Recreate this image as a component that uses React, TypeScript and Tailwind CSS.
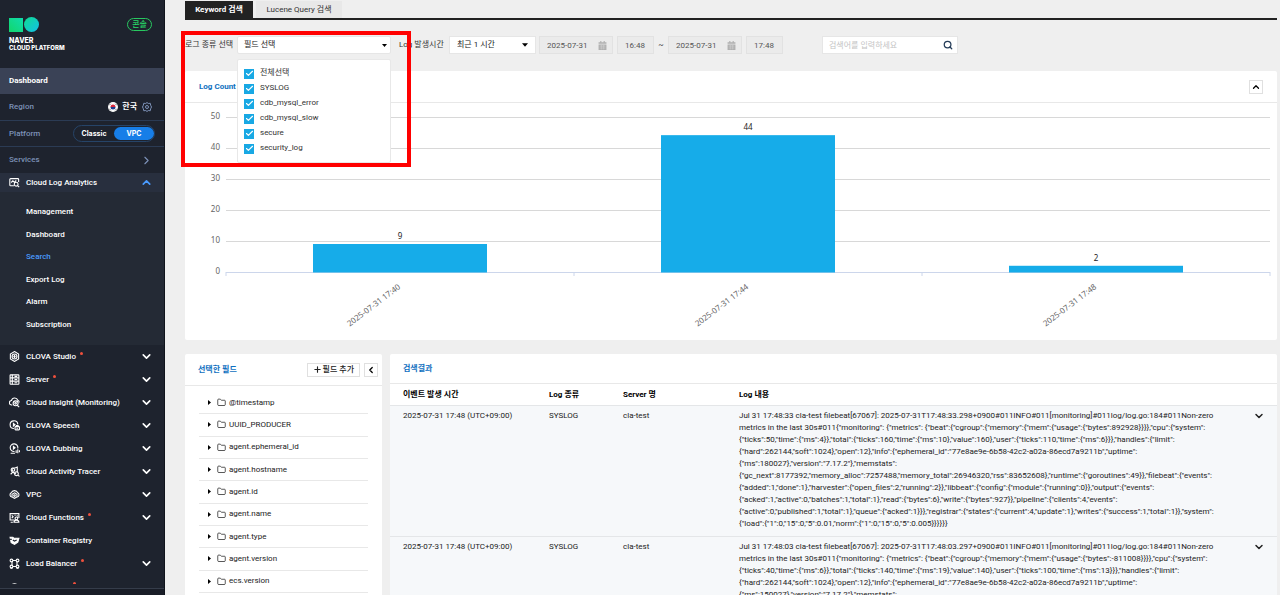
import type { ReactNode } from "react";
import { Check, ChevronDown, ChevronLeft, ChevronRight, ChevronUp, Folder, Plus, Search } from "lucide-react";

const glyphs: Record<string, ReactNode> = {
  log: (
    <>
      <path d="M9 16H3a1.500 1.500 0 0 1-1.500-1.500v-10A1.500 1.500 0 0 1 3 3h13a1.500 1.500 0 0 1 1.500 1.500V9" />
      <path d="m4 10 3-3 3 3 3-4" />
      <circle cx="13" cy="13" r="3.500" />
      <path d="m15.500 15.500 3 3" />
    </>
  ),
  studio: (
    <>
      <path d="m10 1 7.500 4.500v9L10 19l-7.500-4.500v-9z" />
      <circle cx="10" cy="10" r="4.500" />
      <path d="M10 7v6M7.500 8.500v3M12.500 8.500v3" />
    </>
  ),
  server: (
    <>
      <rect x="2" y="1.500" width="16" height="17" rx="1" />
      <path d="M2 7h16M2 13h16M6 1.500v17M10 4.300h5M10 10h5M10 16h5" />
    </>
  ),
  insight: (
    <>
      <path d="M6 14.500H5a4 4 0 0 1-.5-8A6 6 0 0 1 16 6a4 4 0 0 1 2.500 4" />
      <circle cx="12" cy="11.500" r="4.500" />
      <circle cx="12" cy="11.500" r="1.500" />
      <path d="m15 15 3.500 3.500" />
    </>
  ),
  speech: (
    <>
      <path d="M9 15.500A7 7 0 1 1 16 8" />
      <path d="M8 6v5l3-2.500z" fill="currentColor" />
      <rect x="11" y="12" width="8" height="6" rx="1" />
      <path d="M13.500 12v-2h3v2M13.500 15h3" />
    </>
  ),
  dubbing: (
    <>
      <path d="M10 15.500A7 7 0 1 1 16 10" />
      <path d="M8 6v5l3-2.500z" fill="currentColor" />
      <path d="M3 18.500h8M13 13v5M16 11.500v7M19 13v4" />
    </>
  ),
  tracer: (
    <>
      <path d="M6 10.500a4 4 0 0 1 0-7h5l4-1.500v10" />
      <circle cx="8" cy="7" r="2.500" />
      <path d="m3 15 4-4 4 3 2-2" />
      <circle cx="13.500" cy="14" r="3.500" />
      <path d="m16 16.500 3 2.500" />
    </>
  ),
  vpc: (
    <>
      <path d="M5 14.500a4 4 0 0 1-1-7.500 6.500 6.500 0 0 1 12 0 4 4 0 0 1-1 7.500" />
      <path d="m10 7 4.500 2.500v5L10 17l-4.500-2.500v-5z" />
      <circle cx="10" cy="12" r="1.500" />
    </>
  ),
  functions: (
    <>
      <path d="M10 14.500H2V3h16v8" />
      <path d="m5 6 2.500 2.500L5 11M10 6h2M15 6v2" />
      <circle cx="13.500" cy="11.500" r="2.500" />
      <path d="M9 18.500c0-5 9-5 9 0zM3 18.500h4" />
    </>
  ),
  registry: (
    <>
      <path d="M2 4h5l2 2h9l-2 7-6 4-6-3z" fill="currentColor" />
      <path d="M2 8h3M7 9l3 2 4-2" stroke="#1e232e" />
    </>
  ),
  balancer: (
    <>
      <circle cx="4.500" cy="4.500" r="2.500" />
      <circle cx="15.500" cy="4.500" r="2.500" />
      <circle cx="4.500" cy="15.500" r="2.500" />
      <circle cx="15.500" cy="15.500" r="2.500" />
      <path d="M7 4.500h6M7 15.500h6M5.500 7v6M14.500 7v6M2.500 18.500h4M13.500 18.500h4" />
    </>
  ),
  cloud: <path d="M4 17a4 4 0 0 1 0-8 6.500 6.500 0 0 1 12 0 4 4 0 0 1 0 8z" />,
};

const subMenu = ["Management", "Dashboard", "Search", "Export Log", "Alarm", "Subscription"];

const services = [
  { name: "CLOVA Studio", icon: "studio", isNew: true, open: true },
  { name: "Server", icon: "server", isNew: true, open: true },
  { name: "Cloud Insight (Monitoring)", icon: "insight", open: true },
  { name: "CLOVA Speech", icon: "speech", open: true },
  { name: "CLOVA Dubbing", icon: "dubbing", open: true },
  { name: "Cloud Activity Tracer", icon: "tracer", open: true },
  { name: "VPC", icon: "vpc", open: true },
  { name: "Cloud Functions", icon: "functions", isNew: true, open: true },
  { name: "Container Registry", icon: "registry" },
  { name: "Load Balancer", icon: "balancer", isNew: true, open: true },
];

const logTypes = ["전체선택", "SYSLOG", "cdb_mysql_error", "cdb_mysql_slow", "secure", "security_log"];

const fields = [
  "@timestamp",
  "UUID_PRODUCER",
  "agent.ephemeral_id",
  "agent.hostname",
  "agent.id",
  "agent.name",
  "agent.type",
  "agent.version",
  "ecs.version",
];

const bars = [
  { label: "2025-07-31 17:40", value: 9 },
  { label: "2025-07-31 17:44", value: 44 },
  { label: "2025-07-31 17:48", value: 2 },
];

const logs = [
  {
    time: "2025-07-31 17:48 (UTC+09:00)",
    type: "SYSLOG",
    server: "cla-test",
    body: `Jul 31 17:48:33 cla-test filebeat[67067]: 2025-07-31T17:48:33.298+0900#011INFO#011[monitoring]#011log/log.go:184#011Non-zero metrics in the last 30s#011{"monitoring": {"metrics": {"beat":{"cgroup":{"memory":{"mem":{"usage":{"bytes":892928}}}},"cpu":{"system":{"ticks":50,"time":{"ms":4}},"total":{"ticks":160,"time":{"ms":10},"value":160},"user":{"ticks":110,"time":{"ms":6}}},"handles":{"limit":{"hard":262144,"soft":1024},"open":12},"info":{"ephemeral_id":"77e8ae9e-6b58-42c2-a02a-86ecd7a9211b","uptime":{"ms":180027},"version":"7.17.2"},"memstats":{"gc_next":8177392,"memory_alloc":7257488,"memory_total":26946320,"rss":83652608},"runtime":{"goroutines":49}},"filebeat":{"events":{"added":1,"done":1},"harvester":{"open_files":2,"running":2}},"libbeat":{"config":{"module":{"running":0}},"output":{"events":{"acked":1,"active":0,"batches":1,"total":1},"read":{"bytes":6},"write":{"bytes":927}},"pipeline":{"clients":4,"events":{"active":0,"published":1,"total":1},"queue":{"acked":1}}},"registrar":{"states":{"current":4,"update":1},"writes":{"success":1,"total":1}},"system":{"load":{"1":0,"15":0,"5":0.01,"norm":{"1":0,"15":0,"5":0.005}}}}}}`,
  },
  {
    time: "2025-07-31 17:48 (UTC+09:00)",
    type: "SYSLOG",
    server: "cla-test",
    body: `Jul 31 17:48:03 cla-test filebeat[67067]: 2025-07-31T17:48:03.297+0900#011INFO#011[monitoring]#011log/log.go:184#011Non-zero metrics in the last 30s#011{"monitoring": {"metrics": {"beat":{"cgroup":{"memory":{"mem":{"usage":{"bytes":-811008}}}},"cpu":{"system":{"ticks":40,"time":{"ms":6}},"total":{"ticks":140,"time":{"ms":19},"value":140},"user":{"ticks":100,"time":{"ms":13}}},"handles":{"limit":{"hard":262144,"soft":1024},"open":12},"info":{"ephemeral_id":"77e8ae9e-6b58-42c2-a02a-86ecd7a9211b","uptime":{"ms":150027},"version":"7.17.2"},"memstats":`,
  },
];

function Glyph({ name }: { name: string }) {
  return (
    <svg viewBox="0 0 20 20" className="size-[11px] shrink-0" fill="none" stroke="currentColor" strokeWidth="2">
      {glyphs[name]}
    </svg>
  );
}

function Sidebar() {
  return (
    <aside className="flex w-[165px] shrink-0 flex-col border-r border-[#10141c] bg-[#1e232e] text-white">
      <div className="flex h-[68px] shrink-0 items-start justify-between pl-[9px] pr-3 pt-[17px]">
        <div>
          <svg viewBox="0 0 30 15" className="h-[15px] w-[30px]">
            <defs>
              <linearGradient id="square" x1="0" y1="1" x2="1" y2="0">
                <stop offset="0" stopColor="#12d66b" />
                <stop offset="1" stopColor="#10dcae" />
              </linearGradient>
              <linearGradient id="circle" x1="0" y1="0" x2="1" y2="1">
                <stop offset="0" stopColor="#0fdc90" />
                <stop offset="1" stopColor="#14bfe8" />
              </linearGradient>
            </defs>
            <rect y="1" width="14" height="14" fill="url(#square)" />
            <circle cx="22.500" cy="7.500" r="7.500" fill="url(#circle)" />
          </svg>
          <p className="mt-[5px] font-[Inter,sans-serif] text-[7px] leading-[7px] font-extrabold">NAVER</p>
          <p className="font-[Inter,sans-serif] text-[6px] leading-[7px] font-extrabold">CLOUD PLATFORM</p>
        </div>
        <span className="mt-px flex h-[13px] w-[25px] items-center justify-center rounded-full border border-[#28c860] font-medium text-[#28d868]">
          콘솔
        </span>
      </div>

      <a href="#dashboard" className="flex h-[26px] shrink-0 items-center bg-[#3a4256] pl-[9px] font-bold">
        Dashboard
      </a>
      <div className="flex h-[27px] shrink-0 items-center border-b border-[#2b3b54] pl-[9px] pr-3 font-medium text-[#7d92b8]">
        Region
        <svg viewBox="0 0 20 20" className="ml-auto size-[10px]">
          <circle cx="10" cy="10" r="10" fill="#fff" />
          <path d="M5 10a5 5 0 0 1 10 0z" fill="#d8283c" />
          <path d="M5 10a5 5 0 0 0 10 0z" fill="#1d3f8f" />
          <path d="m2.500 6.500 3-3M14.500 3.500l3 3M2.500 13.500l3 3M14.500 16.500l3-3" stroke="#444" strokeWidth="1.500" />
        </svg>
        <span className="ml-1 font-bold text-white">한국</span>
        <button type="button" aria-label="Region" className="ml-[5px]">
          <svg viewBox="0 0 20 20" className="size-[10px]" fill="none" stroke="currentColor" strokeWidth="2">
            <path d="m10 1 2.500 2 4-.5.800 4L19 10l-1.700 3.500-.8 4-4-.5L10 19l-2.500-2-4 .5-.8-4L1 10l1.700-3.500.8-4 4 .5z" />
            <circle cx="10" cy="10" r="3" />
          </svg>
        </button>
      </div>
      <div className="flex h-[26px] shrink-0 items-center border-b border-[#2b3b54] pl-[9px] pr-[9px] font-medium text-[#7d92b8]">
        Platform
        <div className="ml-auto flex h-[17px] w-[82px] items-center rounded-full border border-[#264468] font-[Inter,sans-serif] text-[7px] font-bold text-white">
          <button type="button" className="w-10">Classic</button>
          <button type="button" className="h-[13px] w-10 rounded-full bg-[#177ee8]">VPC</button>
        </div>
      </div>
      <a href="#services" className="flex h-[26px] shrink-0 items-center justify-between pl-[9px] pr-[11px] font-medium text-[#7d92b8]">
        Services
        <ChevronRight size={13} strokeWidth={2} />
      </a>
      <button type="button" className="flex h-[19px] shrink-0 items-center bg-[#282f3e] pl-[9px] pr-[11px] font-medium">
        <Glyph name="log" />
        <span className="ml-[6px]">Cloud Log Analytics</span>
        <ChevronUp size={13} strokeWidth={3} className="ml-auto text-[#4a9bff]" />
      </button>
      <nav className="flex h-[153px] shrink-0 flex-col bg-[#242a35] py-[9px] pl-[26px] font-medium">
        {subMenu.map((item) => (
          <a
            key={item}
            href="#menu"
            className={`flex flex-1 items-center ${item === "Search" ? "text-[#4a9bff]" : "text-white"}`}
          >
            {item}
          </a>
        ))}
      </nav>

      <ul className="min-h-0 flex-1 overflow-hidden font-medium">
        {services.map((service) => (
          <li key={service.name}>
            <button type="button" className="flex h-[23px] w-full items-center pl-[9px] pr-[11px]">
              <Glyph name={service.icon} />
              <span className="ml-[6px]">{service.name}</span>
              {service.isNew ? <i className="mb-[6px] ml-1 size-[3px] rounded-full bg-[#f0503c]" /> : null}
              {service.open ? <ChevronDown size={13} strokeWidth={3} className="ml-auto" /> : null}
            </button>
          </li>
        ))}
        <li className="flex h-[23px] items-center pl-[9px]">
          <Glyph name="cloud" />
          <i className="mb-[6px] ml-[53px] size-[3px] rounded-full bg-[#f0503c]" />
        </li>
      </ul>
      <div className="mt-1 h-[7px] shrink-0 border-t border-[#353c4a] bg-[#191d27]" />
    </aside>
  );
}

function CalendarIcon() {
  return (
    <svg viewBox="0 0 16 16" className="mr-[5px] size-[9px] shrink-0 text-[#b0b0b0]" fill="currentColor">
      <path d="M1 2h3V0h2v2h4V0h2v2h3v3H1zM1 6h14v10H1z" />
      <path d="M3 9h10M3 12.500h10M6 7v8M10 7v8" stroke="#d0d0d0" />
    </svg>
  );
}

function DateBox({ label }: { label: string }) {
  return (
    <div className="flex h-[18px] w-[74px] items-center border border-[#e2e2e2] bg-[#ebebeb]">
      <input aria-label={label} defaultValue="2025-07-31" className="h-4 min-w-0 flex-1 pl-[7px] text-[#555]" />
      <CalendarIcon />
    </div>
  );
}

function Filters() {
  return (
    <form className="mt-4 flex h-[18px] items-center text-[#333]">
      <div className="relative z-10 flex items-center">
        <label htmlFor="log-type" className="w-[52px] whitespace-nowrap">로그 종류 선택</label>
        <div className="relative">
          <select id="log-type" className="h-[18px] w-[154px] appearance-none rounded-xs border border-[#e6e6e6] bg-white pl-[6px] text-[#222]">
            <option>필드 선택</option>
          </select>
          <svg viewBox="0 0 10 6" className="pointer-events-none absolute right-1 top-2 h-[3px] w-[5px]">
            <path d="M0 0h10L5 6z" />
          </svg>
          <div className="absolute left-0 top-[23px] w-[154px] rounded-xs border border-[#e8e8e8] bg-white pb-[7px] pl-[6px] pt-[5px]">
            {logTypes.map((type) => (
              <label key={type} className="flex h-[15px] items-center text-[#333]">
                <span className="mt-[2px] mr-[6px] grid size-[10px] place-items-center">
                  <input type="checkbox" defaultChecked className="col-start-1 row-start-1 size-[10px] appearance-none bg-[#18a8e4]" />
                  <Check size={9} strokeWidth={3} className="pointer-events-none col-start-1 row-start-1 text-white" />
                </span>
                {type}
              </label>
            ))}
          </div>
        </div>
        <div className="pointer-events-none absolute -left-1 -top-[5px] h-[136px] w-[230px] border-4 border-[#ff0000]" />
      </div>

      <label htmlFor="range" className="ml-2 w-[50px] whitespace-nowrap">Log 발생시간</label>
      <div className="relative mr-[3px]">
        <select id="range" className="h-[18px] w-[87px] appearance-none border border-[#e6e6e6] bg-white pl-[7px] text-[#222]">
          <option>최근 1 시간</option>
        </select>
        <svg viewBox="0 0 10 6" className="pointer-events-none absolute right-2 top-[7px] h-1 w-[6px]">
          <path d="M0 0h10L5 6z" />
        </svg>
      </div>
      <DateBox label="시작 날짜" />
      <input aria-label="시작 시간" defaultValue="16:48" className="ml-1 h-[18px] w-[37px] border border-[#e2e2e2] bg-[#ebebeb] pl-[7px] text-[#555]" />
      <span className="w-[14px] text-center">~</span>
      <DateBox label="종료 날짜" />
      <input aria-label="종료 시간" defaultValue="17:48" className="ml-1 h-[18px] w-[37px] border border-[#e2e2e2] bg-[#ebebeb] pl-[7px] text-[#555]" />
      <div className="ml-[39px] flex h-[18px] w-[136px] items-center border border-[#e6e6e6] bg-white">
        <input aria-label="검색어" placeholder="검색어를 입력하세요" className="h-4 min-w-0 flex-1 pl-[6px] placeholder:text-[#c4c4c4]" />
        <button type="button" aria-label="검색" className="mr-1 text-[#243c58]">
          <Search size={10} strokeWidth={3} />
        </button>
      </div>
    </form>
  );
}

// 0 sits at y=169, every 10 counts take 31px
function Chart() {
  const y = (value: number) => 169 - value * 3.11;

  return (
    <div className="pl-[41px] pr-[7px] font-['Noto_Sans',sans-serif]">
      <svg className="h-[237px] w-full overflow-visible">
        {[50, 40, 30, 20, 10, 0].map((tick) => (
          <g key={tick}>
            <line x1="0" x2="100%" y1={Math.round(y(tick)) + 0.5} y2={Math.round(y(tick)) + 0.5} stroke={tick ? "#d8d8d8" : "#ccd6eb"} />
            <text x="-6" y={y(tick) + 2} textAnchor="end" fill="#666">
              {tick}
            </text>
          </g>
        ))}
        {[0, 1, 2, 3].map((i) => (
          <line key={i} x1={`${(i * 100) / 3}%`} x2={`${(i * 100) / 3}%`} y1="169" y2="173" stroke="#ccd6eb" />
        ))}
        {bars.map((bar, i) => (
          <g key={bar.label}>
            <rect x={`${(i * 200 + 50) / 6}%`} width={`${100 / 6}%`} y={y(bar.value)} height={169.5 - y(bar.value)} fill="#16ace9" />
            <svg x={`${(i * 200 + 100) / 6}%`} className="overflow-visible">
              <text y={y(bar.value) - 5} textAnchor="middle" fill="#222">
                {bar.value}
              </text>
              <text transform="translate(1 185) rotate(-37)" textAnchor="end" fill="#666">
                {bar.label}
              </text>
            </svg>
          </g>
        ))}
      </svg>
    </div>
  );
}

function FieldPanel() {
  return (
    <section className="w-[197px] shrink-0 rounded-xs bg-white">
      <div className="flex h-8 items-center border-b border-[#e8e8e8] pl-[13px] pr-1">
        <h2 className="font-bold text-[#0f6fc0]">선택한 필드</h2>
        <button type="button" className="ml-auto flex h-[14px] items-center gap-px border border-[#e0e0e0] px-[5px] font-medium text-[#222]">
          <Plus size={9} strokeWidth={3} />
          필드 추가
        </button>
        <button type="button" aria-label="접기" className="ml-1 flex size-[14px] items-center justify-center border border-[#e0e0e0]">
          <ChevronLeft size={10} strokeWidth={3} />
        </button>
      </div>
      <ul className="mx-[14px] mt-[6px] flex h-[202px] flex-col pb-px text-[#222]">
        {fields.map((field) => (
          <li key={field} className="flex flex-1 items-center border-b border-[#e8e8e8] pl-[9px]">
            <svg viewBox="0 0 6 10" className="h-[5px] w-[3px]">
              <path d="M0 0v10l6-5z" />
            </svg>
            <Folder size={9} strokeWidth={2} className="ml-[6px] mr-[3px]" />
            {field}
          </li>
        ))}
      </ul>
    </section>
  );
}

function Results() {
  return (
    <section className="min-w-0 flex-1 rounded-xs bg-white">
      <h2 className="flex h-[30px] items-center border-b border-[#e8e8e8] pl-[13px] font-bold text-[#0f6fc0]">검색결과</h2>
      <table className="w-full table-fixed text-left text-[#222]">
        <thead>
          <tr className="h-[21px] border-b border-[#e4e6e8] text-black">
            <th className="w-[159px] pl-[13px] pt-px font-bold">이벤트 발생 시간</th>
            <th className="w-[74px] pt-px font-bold">Log 종류</th>
            <th className="w-[116px] pt-px font-bold">Server 명</th>
            <th className="pt-px font-bold">Log 내용</th>
            <th className="w-[24px]" />
          </tr>
        </thead>
        <tbody>
          {logs.map((log, i) => (
            <tr key={i} className="border-b border-[#e4e6e8] bg-[#f6f8fa] align-top">
              <td className="pb-[6px] pl-[13px] pt-1">{log.time}</td>
              <td className="pt-1">{log.type}</td>
              <td className="pt-1">{log.server}</td>
              <td className="pb-[6px] pr-6 pt-1">{log.body}</td>
              <td className="pt-1">
                <button type="button" aria-label="펼치기" className="block">
                  <ChevronDown size={12} strokeWidth={3} />
                </button>
              </td>
            </tr>
          ))}
        </tbody>
      </table>
    </section>
  );
}

export default function App() {
  return (
    <div
      lang="ko"
      className="flex h-screen overflow-hidden bg-[#efefef] font-[Roboto,'Noto_Sans_CJK_KR',sans-serif] text-[8px] leading-3"
    >
      <Sidebar />
      <main className="min-w-0 flex-1 pl-5 pr-[3px]">
        <div className="flex h-5 items-end gap-[3px] border-b-2 border-[#222]">
          <button type="button" className="h-[17px] w-[68px] bg-[#222] font-bold text-white">Keyword 검색</button>
          <button type="button" className="h-[17px] w-[86px] bg-[#e8e8e8] text-[#333]">Lucene Query 검색</button>
        </div>

        <Filters />

        <section className="mt-[17px] rounded-xs bg-white">
          <div className="flex h-8 items-center justify-between border-b border-[#e8e8e8] pl-[14px] pr-[14px]">
            <h2 className="font-bold text-[#0f6fc0]">Log Count</h2>
            <button type="button" aria-label="접기" className="flex size-[14px] items-center justify-center border border-[#e0e0e0]">
              <ChevronUp size={10} strokeWidth={3} />
            </button>
          </div>
          <Chart />
        </section>

        <div className="mt-[14px] flex gap-2">
          <FieldPanel />
          <Results />
        </div>
      </main>
    </div>
  );
}
